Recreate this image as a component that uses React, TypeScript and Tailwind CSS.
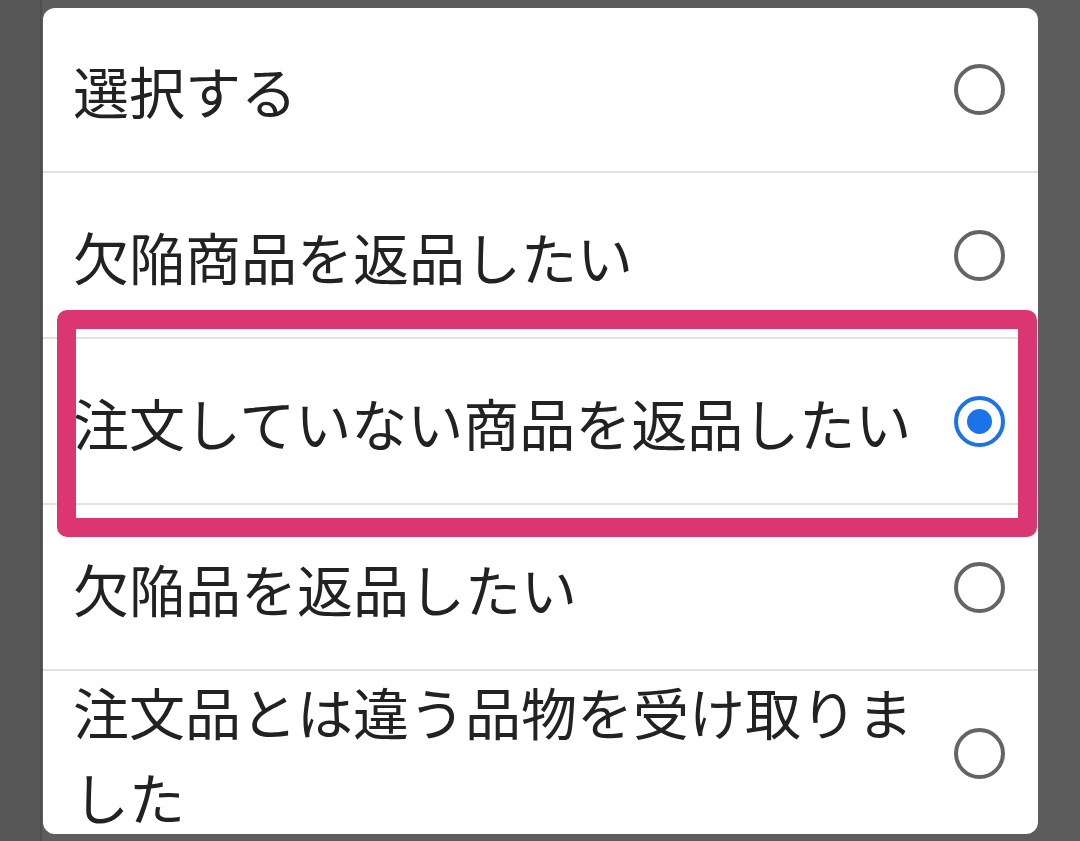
import React, { useState } from 'react'

const OPTIONS = [
  '選択する',
  '欠陥商品を返品したい',
  '注文していない商品を返品したい',
  '欠陥品を返品したい',
  '注文品とは違う品物を受け取りました',
]

const Radio = ({ checked }: { checked: boolean }) => (
  <div
    className={`flex h-[51px] w-[51px] shrink-0 items-center justify-center rounded-full border-[4.5px] ${
      checked ? 'border-[#1a73e8]' : 'border-[#646464]'
    }`}
  >
    {checked && <div className="h-[25px] w-[25px] rounded-full bg-[#1a73e8]" />}
  </div>
)

export default function App() {
  const [selected, setSelected] = useState(2)

  return (
    <div
      className="flex h-[841px] w-[1080px] overflow-hidden bg-[#5d5d5d]"
      style={{ fontFamily: '"Noto Sans CJK JP", "Noto Sans", sans-serif' }}
    >
      {/* dimmed page behind the dialog */}
      <div className="w-[42px] shrink-0 border-r-2 border-[#4f4f4f] bg-[#585858]" />

      <div className="pl-[1px] pt-[8px]">
        {/* Dialog */}
        <div className="relative h-[826px] w-[995px] overflow-hidden rounded-[12px] bg-white">
          {OPTIONS.map((label, i) => (
            <div
              key={label}
              onClick={() => setSelected(i)}
              className={`flex cursor-pointer items-center border-b-2 border-[#e2e2e2] pl-[30px] pr-[33px] ${
                i === 0 ? 'h-[165px]' : 'h-[166px]'
              }`}
            >
              <div className="w-[857px] text-[56px] leading-[85px] text-[#222222]">{label}</div>
              <div className="flex-1" />
              <Radio checked={selected === i} />
            </div>
          ))}

          {/* highlight annotation */}
          <div className="pointer-events-none absolute left-[14px] top-[302px] h-[227px] w-[980px] rounded-[10px] border-[19px] border-[#dc3672]" />
        </div>
      </div>
    </div>
  )
}
